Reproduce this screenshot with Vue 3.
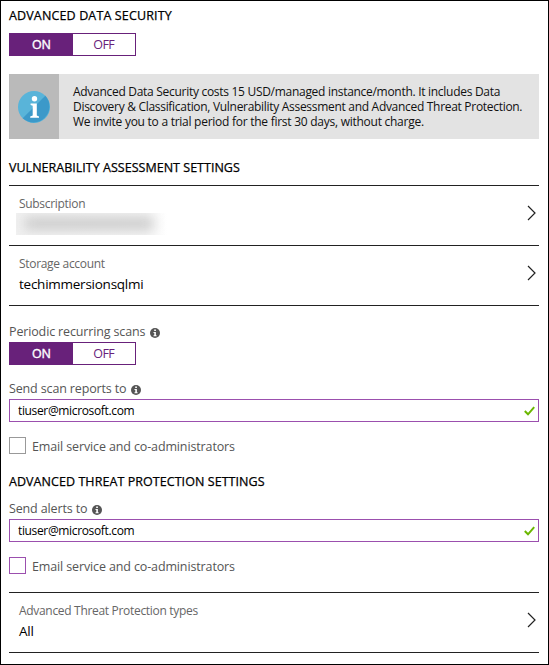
<script setup>
import { reactive } from 'vue'

const state = reactive({
  security: true,
  scans: true,
  reportsTo: 'tiuser@microsoft.com',
  alertsTo: 'tiuser@microsoft.com'
})
</script>

<template>
  <main class="panel">
    <h2 class="heading first">ADVANCED DATA SECURITY</h2>
    <div class="toggle">
      <button :class="{ on: state.security }" @click="state.security = true">ON</button>
      <button :class="{ on: !state.security }" @click="state.security = false">OFF</button>
    </div>

    <section class="banner">
      <div class="banner-icon">
        <svg width="32" height="32" viewBox="0 0 32 32">
          <circle cx="16" cy="16" r="16" fill="#59b4d9" />
          <path d="M27.3 4.7A16 16 0 0 1 4.7 27.3Z" fill="#3c99c9" />
          <circle cx="16.5" cy="7.8" r="2.7" fill="#fff" />
          <path d="M12.6 12.4h6.2v12.2l2.2.8v1.4h-8.8v-1.4l2.5-.8V14.7l-2.1-.8z" fill="#fff" />
        </svg>
      </div>
      <p class="banner-text">
        Advanced Data Security costs 15 USD/managed instance/month. It includes Data<br>
        <span class="b2">Discovery &amp; Classification, Vulnerability Assessment and Advanced Threat Protection.</span><br>
        <span class="b3">We invite you to a trial period for the first 30 days, without charge.</span>
      </p>
    </section>

    <h2 class="heading second">VULNERABILITY ASSESSMENT SETTINGS</h2>
    <div class="rows">
      <div class="row">
        <div class="row-body">
          <div class="row-label">Subscription</div>
          <div class="redacted"><i></i></div>
        </div>
        <svg class="chevron" width="9" height="16" viewBox="0 0 9 16"><path d="M1 1l7 7-7 7" /></svg>
      </div>
      <div class="row">
        <div class="row-body">
          <div class="row-label">Storage account</div>
          <div class="row-value">techimmersionsqlmi</div>
        </div>
        <svg class="chevron" width="9" height="16" viewBox="0 0 9 16"><path d="M1 1l7 7-7 7" /></svg>
      </div>
    </div>

    <div class="label scans">
      <span>Periodic recurring scans</span>
      <svg class="info" width="10" height="10" viewBox="0 0 10 10"><circle cx="5" cy="5" r="5" /><path d="M4.2 1.6h1.7v1.5H4.2zM3.5 4h2.4v3.3h.7v1H3.5v-1h.8V5h-.8z" /></svg>
    </div>
    <div class="toggle">
      <button :class="{ on: state.scans }" @click="state.scans = true">ON</button>
      <button :class="{ on: !state.scans }" @click="state.scans = false">OFF</button>
    </div>

    <div class="label reports">
      <span>Send scan reports to</span>
      <svg class="info" width="10" height="10" viewBox="0 0 10 10"><circle cx="5" cy="5" r="5" /><path d="M4.2 1.6h1.7v1.5H4.2zM3.5 4h2.4v3.3h.7v1H3.5v-1h.8V5h-.8z" /></svg>
    </div>
    <div class="field">
      <input v-model="state.reportsTo" type="text">
      <svg width="11" height="10" viewBox="0 0 11 10"><path d="M.8 5l3.2 3.3L10.2 1.2" /></svg>
    </div>
    <div class="check"><span class="box"></span><span class="check-text">Email service and co-administrators</span></div>

    <h2 class="heading third">ADVANCED THREAT PROTECTION SETTINGS</h2>
    <div class="label alerts">
      <span>Send alerts to</span>
      <svg class="info" width="10" height="10" viewBox="0 0 10 10"><circle cx="5" cy="5" r="5" /><path d="M4.2 1.6h1.7v1.5H4.2zM3.5 4h2.4v3.3h.7v1H3.5v-1h.8V5h-.8z" /></svg>
    </div>
    <div class="field">
      <input v-model="state.alertsTo" type="text">
      <svg width="11" height="10" viewBox="0 0 11 10"><path d="M.8 5l3.2 3.3L10.2 1.2" /></svg>
    </div>
    <div class="check"><span class="box purple"></span><span class="check-text">Email service and co-administrators</span></div>

    <div class="rows last">
      <div class="row">
        <div class="row-body">
          <div class="row-label">Advanced Threat Protection types</div>
          <div class="row-value">All</div>
        </div>
        <svg class="chevron" width="9" height="16" viewBox="0 0 9 16"><path d="M1 1l7 7-7 7" /></svg>
      </div>
    </div>
  </main>
</template>

<style scoped>
.panel {
  box-sizing: border-box;
  width: 549px;
  height: 665px;
  padding: 0 9px 0 8px;
  border: 1px solid #000;
  background: #fff;
  color: #111;
  font-family: "Open Sans", "Noto Sans", sans-serif;
  font-size: 12.5px;
  white-space: nowrap;
  overflow: hidden;
}
.heading { margin: 0; height: 20px; font-size: 12.5px; line-height: 20px; font-weight: 400; color: #000; -webkit-text-stroke: 0.25px #000; }
.first { margin-top: 5px; letter-spacing: 0.14px; }
.second { margin-top: 19px; letter-spacing: 0.02px; }
.third { margin-top: 18px; letter-spacing: 0.06px; }
.toggle { display: flex; box-sizing: border-box; width: 127px; height: 23px; border: 1px solid #68217a; }
.first + .toggle { margin-top: 7px; }
.toggle button { flex: 1; padding: 0; border: 0; background: #fff; color: #68217a; font: 12.5px/21px "Open Sans", sans-serif; letter-spacing: -0.6px; }
.toggle button.on { background: #68217a; color: #fff; letter-spacing: -0.4px; -webkit-text-stroke: 0.4px #fff; }
.banner { display: flex; height: 65px; margin-top: 18px; background: #e3e3e3; }
.banner-icon { display: flex; flex: none; align-items: center; justify-content: center; width: 50px; background: #bababa; }
.banner-text { margin: 10px 0 0 14px; font-size: 12px; line-height: 15px; letter-spacing: -0.29px; color: #111; }
.b2 { letter-spacing: -0.3px; }
.b3 { letter-spacing: -0.26px; }
.rows { margin-top: 7px; border-top: 1px solid #222; }
.row { display: flex; box-sizing: border-box; height: 60px; padding: 0 3px 0 10px; justify-content: space-between; border-bottom: 1px solid #222; }
.row-label { margin-top: 8px; height: 20px; line-height: 20px; font-size: 12px; letter-spacing: -0.31px; color: #666; }
.row-value { height: 20px; line-height: 20px; font-size: 13.5px; letter-spacing: -0.25px; color: #000; }
.chevron { margin-top: 19px; fill: none; stroke: #222; stroke-width: 1.2; }
.redacted { width: 151px; height: 22px; margin-left: -3px; margin-top: -1px; overflow: hidden; background: linear-gradient(90deg, #f0f0f0, #f3f3f3 85%, #fff); }
.redacted i { display: block; width: 128px; height: 11px; margin: 5px 0 0 9px; background: #c8c8c8; filter: blur(6px); }
.label { display: flex; align-items: center; height: 20px; line-height: 20px; letter-spacing: -0.14px; color: #555; }
.scans { margin-top: 16px; }
.reports { margin-top: 14px; }
.alerts { margin-top: 7px; }
.info { margin: 2px 0 0 5px; }
.info circle { fill: #555; }
.info path { fill: #fff; }
.field { display: flex; align-items: center; box-sizing: border-box; height: 23px; padding: 0 3px 0 8px; border: 1px solid #9b4fae; }
.field input { flex: 1; min-width: 0; padding: 0; border: 0; outline: 0; color: #000; background: none; font: 12px/18px "Open Sans", sans-serif; letter-spacing: -0.35px; }
.field svg { margin-top: 1px; fill: none; stroke: #6bb700; stroke-width: 2; }
.check { display: flex; align-items: center; height: 17px; margin-top: 15px; letter-spacing: -0.13px; color: #555; }
.check-text { padding-top: 2px; }
.box { box-sizing: border-box; width: 17px; height: 17px; margin-right: 6px; border: 1px solid #999; }
.box.purple { border-color: #9b4fae; }
.last { margin-top: 18px; }
</style>
